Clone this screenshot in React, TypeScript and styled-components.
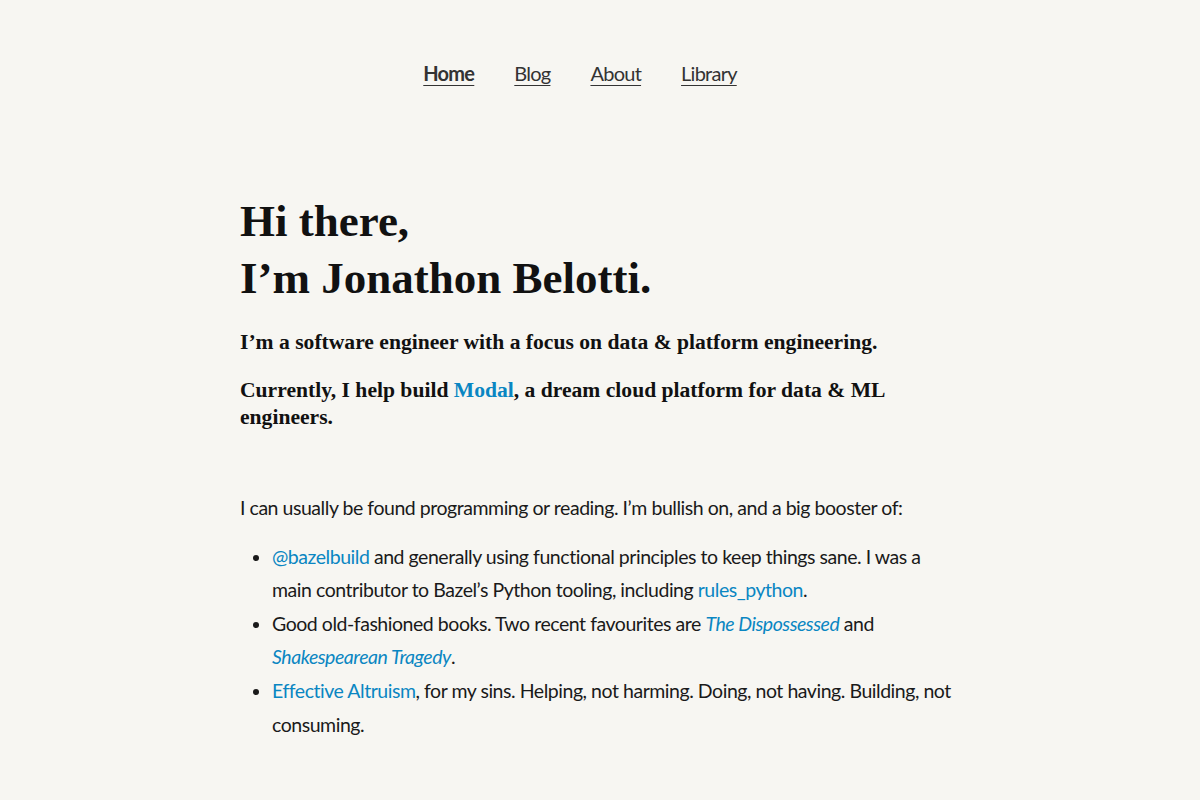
import React from "react";
import styled, { createGlobalStyle } from "styled-components";

const Global = createGlobalStyle`
  html, body { margin: 0; padding: 0; background: #f7f6f2; }
  body { font-family: Lato, "Open Sans", sans-serif; color: #1a1a1a; }
`;

const Page = styled.div`
  min-height: 800px;
  display: flex;
  flex-direction: column;
  align-items: center;
`;

const Nav = styled.nav`
  display: flex;
  gap: 40px;
  padding-top: 61px;
  margin-right: 40px;
`;

const NavLink = styled.a<{ $active?: boolean }>`
  font-size: 20px;
  color: #333;
  font-weight: ${(p) => (p.$active ? 700 : 400)};
  text-decoration: underline;
  text-underline-offset: 4px;
  text-decoration-thickness: 1px;
  letter-spacing: -0.75px;
`;

const Main = styled.main`
  width: 720px;
  padding-top: 108px;
`;

const Title = styled.h1`
  font-family: "Liberation Serif", serif;
  font-size: 45px;
  line-height: 57px;
  font-weight: 700;
  color: #111;
  margin: 0 0 22px;
`;

const Lead = styled.p`
  font-family: "Liberation Serif", serif;
  font-weight: 700;
  font-size: 21.6px;
  line-height: 27px;
  color: #111;
  margin: 0 0 21px;
`;

const Link = styled.a`
  color: #0a86c2;
  text-decoration: none;
`;

const Body = styled.p`
  font-size: 19.5px;
  line-height: 33.6px;
  margin: 60px 0 15px;
  letter-spacing: -0.46px;
`;

const List = styled.ul`
  margin: 0;
  padding-left: 32px;
  font-size: 19.5px;
  line-height: 33.6px;
  letter-spacing: -0.46px;
`;

export default function App() {
  return (
    <Page>
      <Global />
      <Nav>
        <NavLink $active>Home</NavLink>
        <NavLink>Blog</NavLink>
        <NavLink>About</NavLink>
        <NavLink>Library</NavLink>
      </Nav>
      <Main>
        <Title>
          Hi there,
          <br />
          I’m Jonathon Belotti.
        </Title>
        <Lead>I’m a software engineer with a focus on data &amp; platform engineering.</Lead>
        <Lead>
          Currently, I help build <Link>Modal</Link>, a dream cloud platform for data &amp; ML engineers.
        </Lead>
        <Body>I can usually be found programming or reading. I’m bullish on, and a big booster of:</Body>
        <List>
          <li>
            <Link>@bazelbuild</Link> and generally using functional principles to keep things sane. I was a main
            contributor to Bazel’s Python tooling, including <Link>rules_python</Link>.
          </li>
          <li>
            Good old-fashioned books. Two recent favourites are <Link as="em">The Dispossessed</Link> and{" "}
            <Link as="em">Shakespearean Tragedy</Link>.
          </li>
          <li>
            <Link>Effective Altruism</Link>, for my sins. Helping, not harming. Doing, not having. Building, not
            consuming.
          </li>
        </List>
      </Main>
    </Page>
  );
}
